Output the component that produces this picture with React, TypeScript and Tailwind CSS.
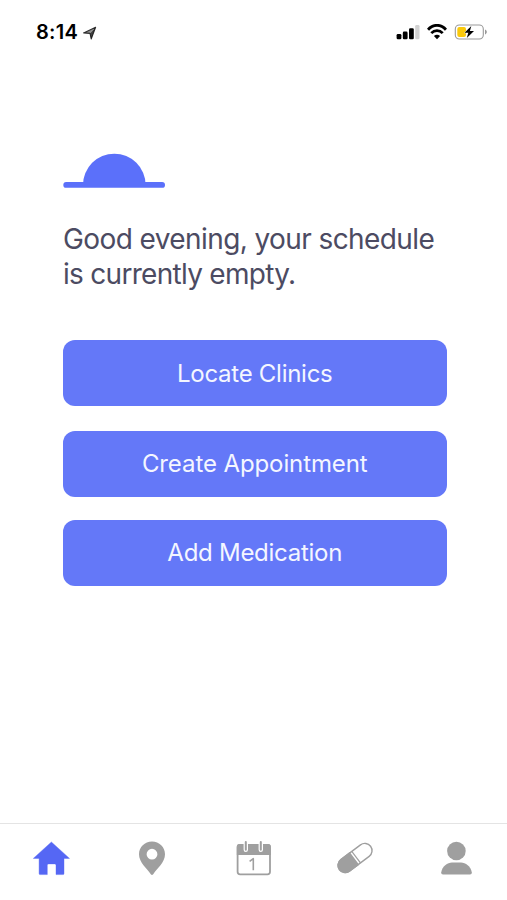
import type { ReactNode } from "react";

const ACTIONS = [
  { label: "Locate Clinics", className: "h-[66px]", textClass: "tracking-[-0.27px]" },
  { label: "Create Appointment", className: "mt-[24.5px] h-[66.5px]", textClass: "tracking-[-0.1px]" },
  { label: "Add Medication", className: "mt-[22.5px] h-[66.5px]", textClass: "tracking-[-0.27px]" },
];

function StatusBar() {
  return (
    <header className="flex h-16 items-center pr-[19px] pl-9 text-black">
      <time className="text-[20px] leading-6 font-semibold tracking-[0.3px]">8:14</time>
      <svg className="mt-0.5 ml-[4px] h-[15px] w-[15px]" viewBox="0 0 15 15" fill="none">
        <path
          d="M13.6 1.2 9.2 13 8 7.4 1.6 6.9Z"
          stroke="#333"
          strokeWidth="1.1"
          strokeLinejoin="round"
        />
        <path d="M13.6 1.2 9.2 13 8 7.4Z" fill="#111" fillOpacity="0.8" />
        <path d="M13.6 1.2 1.6 6.9 8 7.4Z" fill="#222" fillOpacity="0.5" />
      </svg>
      <div className="ml-auto flex items-center gap-[7px]">
        <svg className="h-4 w-6" viewBox="0 0 24 16">
          <rect x="0.6" y="10" width="4.8" height="5.2" rx="1.3" />
          <rect x="6.8" y="7.6" width="4.8" height="7.6" rx="1.3" />
          <rect x="13" y="4.3" width="4.8" height="10.9" rx="1.3" />
          <rect x="19.2" y="1" width="4.3" height="14.2" rx="1.3" fill="#d2d2d2" />
        </svg>
        <svg className="h-4 w-5" viewBox="0 0 20 16" fill="none" stroke="currentColor">
          <path d="M1 5.7C6-.1 14-.1 19 5.7" strokeWidth="2.9" />
          <path d="M4.3 9.2c3.2-3.5 8.2-3.5 11.4 0" strokeWidth="2.7" />
          <path d="M6.9 11.9c1.8-1.6 4.4-1.6 6.2 0L10 15.3Z" fill="currentColor" stroke="none" />
        </svg>
        <svg className="h-4 w-[34px]" viewBox="0 0 34 16" fill="none">
          <rect x="1.3" y="1" width="28" height="14" rx="4" stroke="#999" strokeWidth="1.1" />
          <rect x="3.3" y="2.9" width="8.7" height="10.2" rx="2" fill="#fac90b" />
          <path d="M31 5.6c2.4.8 2.4 4 0 4.8Z" fill="#999" />
          <path
            d="M17.3 2 10.5 8.8h3.8L12.8 14 20 7h-4.1Z"
            fill="#000"
            stroke="#fff"
            strokeWidth="0.8"
            paintOrder="stroke"
          />
        </svg>
      </div>
    </header>
  );
}

function TabButton({ label, active, children }: { label: string; active?: boolean; children: ReactNode }) {
  return (
    <button
      aria-label={label}
      className={`flex flex-1 justify-center pt-[15px] ${active ? "text-[#5567f4]" : "text-[#9f9f9f]"}`}
    >
      <svg className="h-10 w-10" viewBox="0 0 40 40" fill="none">
        {children}
      </svg>
    </button>
  );
}

function TabBar() {
  return (
    <nav className="mt-auto flex h-[77px] border-t-[1.5px] border-[#e4e4e4]">
      <TabButton label="Home" active>
        <path
          d="M20.4 3 38.5 19.4H33V34.4q0 1.2-1.2 1.2H25V26.2q0-1.3-1.3-1.3H17.6q-1.3 0-1.3 1.3v9.4H9.3q-1.2 0-1.2-1.2v-15H2.3Z"
          fill="currentColor"
          stroke="currentColor"
          strokeWidth="0.4"
          strokeLinejoin="round"
        />
      </TabButton>
      <TabButton label="Clinics">
        <path
          d="M20 2.6c-7.3 0-13 5.6-13 12.7 0 8.2 8 14.3 11.8 19.9q1.2 1.6 2.4 0C25 29.6 33 23.5 33 15.3 33 8.2 27.3 2.6 20 2.6Zm0 7.2a5.4 5.4 0 1 1 0 10.8 5.4 5.4 0 0 1 0-10.8Z"
          fill="currentColor"
          fillRule="evenodd"
        />
      </TabButton>
      <TabButton label="Appointments">
        <rect x="3.6" y="6" width="32.4" height="29.3" rx="2.5" stroke="currentColor" strokeWidth="1.8" />
        <path d="M2.8 16V7.6q0-2.5 2.5-2.5h29q2.5 0 2.5 2.5V16Z" fill="currentColor" />
        <path d="M11.8 3.5v7.3M26.8 3.5v7.3" stroke="#fff" strokeWidth="4.4" strokeLinecap="round" />
        <path d="M11.8 3v7.8M26.8 3v7.8" stroke="currentColor" strokeWidth="2" strokeLinecap="round" />
        <path d="m15.6 22.4 3.7-2.7v11.6" stroke="currentColor" strokeWidth="1.6" strokeLinejoin="round" />
      </TabButton>
      <TabButton label="Medication">
        <g transform="rotate(-37 20 19)">
          <rect x="0.5" y="11.8" width="39" height="14.4" rx="7.2" stroke="currentColor" strokeWidth="1.4" />
          <path d="M19.3 11.1H7.9a7.9 7.9 0 0 0 0 15.8h11.4Z" fill="currentColor" />
          <path d="M21.4 11.8v14.4" stroke="currentColor" strokeWidth="1.2" />
        </g>
      </TabButton>
      <TabButton label="Profile">
        <circle cx="20.4" cy="12" r="9.3" fill="currentColor" />
        <path
          d="M5.2 33.5C6.2 27.3 11.5 23.6 16 23.6h9c4.5 0 9.8 3.7 10.8 9.9q.2 2.1-1.8 2.1H7q-2 0-1.8-2.1Z"
          fill="currentColor"
        />
      </TabButton>
    </nav>
  );
}

export default function App() {
  return (
    <div className="flex h-[900px] w-[507px] flex-col overflow-hidden bg-white font-['Inter','Noto_Sans',sans-serif]">
      <StatusBar />
      <main className="px-[63px] pt-[89px]">
        <svg className="h-[36px] w-[103px]" viewBox="0 0 103 36" fill="#5b70fa">
          <path d="M20 32a31.3 31.3 0 0 1 62.6 0Z" />
          <rect x="0.3" y="29" width="101.7" height="5.8" rx="2.9" />
        </svg>
        <h1 className="mt-[33px] text-[28px] leading-[35px] font-normal tracking-[-0.59px] whitespace-nowrap text-[#4c4b62]">
          Good evening, your schedule
          <br />
          <span className="tracking-[-0.71px]">is currently empty.</span>
        </h1>
        <div className="mt-[48px] flex w-[383.5px] flex-col">
          {ACTIONS.map((action) => (
            <button
              key={action.label}
              className={`rounded-[12px] bg-[#6478f8] pt-px text-[24px] font-normal text-[#f4f6ff] ${action.className}`}
            >
              <span className={action.textClass}>{action.label}</span>
            </button>
          ))}
        </div>
      </main>
      <TabBar />
    </div>
  );
}
